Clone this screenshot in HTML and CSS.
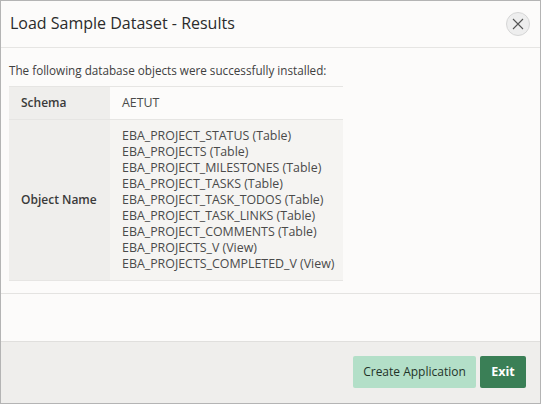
FILE: index.html
```html
<!DOCTYPE html>
<html lang="en">
<head>
<meta charset="utf-8">
<title>Load Sample Dataset - Results</title>
<link rel="stylesheet" href="styles.css">
</head>
<body>
<div class="dialog">
  <header class="dialog-header">
    <h1 class="dialog-title">Load Sample Dataset - Results</h1>
    <button class="close-btn" aria-label="Close">
      <svg width="12" height="12" viewBox="0 0 12 12"><path d="M1 1L11 11M11 1L1 11" stroke="#555" stroke-width="1.1" fill="none"/></svg>
    </button>
  </header>
  <main class="dialog-body">
    <section class="region">
      <p class="intro">The following database objects were successfully installed:</p>
      <table class="results">
        <colgroup><col class="col-head"><col class="col-value"></colgroup>
        <tr class="row-light">
          <th>Schema</th>
          <td>AETUT</td>
        </tr>
        <tr class="row-shaded">
          <th>Object Name</th>
          <td>
            EBA_PROJECT_STATUS (Table)<br>
            EBA_PROJECTS (Table)<br>
            EBA_PROJECT_MILESTONES (Table)<br>
            EBA_PROJECT_TASKS (Table)<br>
            EBA_PROJECT_TASK_TODOS (Table)<br>
            EBA_PROJECT_TASK_LINKS (Table)<br>
            EBA_PROJECT_COMMENTS (Table)<br>
            EBA_PROJECTS_V (View)<br>
            EBA_PROJECTS_COMPLETED_V (View)
          </td>
        </tr>
      </table>
    </section>
    <div class="spacer"></div>
  </main>
  <footer class="dialog-footer">
    <button class="btn btn-create">Create Application</button>
    <button class="btn btn-exit">Exit</button>
  </footer>
</div>
</body>
</html>
```

FILE: styles.css
```css
* { box-sizing: border-box; }
html, body { margin: 0; padding: 0; }
body {
  width: 541px;
  height: 404px;
  font-family: "Open Sans", "Noto Sans", sans-serif;
  background: #fcfbfa;
}
.dialog {
  width: 541px;
  height: 404px;
  border: 1px solid #b4b4b4;
  display: flex;
  flex-direction: column;
  background: #fcfbfa;
}
.dialog-header {
  height: 47px;
  flex: 0 0 47px;
  border-bottom: 1px solid #e6e5e3;
  display: flex;
  align-items: center;
  justify-content: space-between;
  padding: 0 10px 0 9px;
}
.dialog-title {
  margin: 0;
  font-size: 16px;
  font-weight: 500;
  color: #2b2b2b;
  margin-top: -2px;
}
.close-btn {
  width: 24px;
  height: 24px;
  border-radius: 50%;
  border: 1px solid #d6d6d6;
  background: #eeeeee;
  display: flex;
  align-items: center;
  justify-content: center;
  padding: 0;
  margin-top: -1px;
}
.dialog-body {
  flex: 1;
  display: flex;
  flex-direction: column;
}
.region {
  padding: 14px 8px 12px 8px;
  border-bottom: 1px solid #e4e3e1;
}
.intro {
  margin: 0 0 8px 0;
  font-size: 11.7px;
  line-height: 16px;
  color: #404040;
}
.results {
  border-collapse: collapse;
  table-layout: fixed;
  width: 334px;
  line-height: 16px;
}
.col-head { width: 101px; }
.col-value { width: 233px; }
.results th, .results td {
  border-top: 1px solid #e6e5e3;
  border-bottom: 1px solid #e6e5e3;
  border-left: none;
  border-right: none;
  padding: 8px 12px;
  vertical-align: middle;
  text-align: left;
  white-space: nowrap;
}
.results th {
  background: #efeeec;
  font-weight: 600;
  font-size: 12px;
  color: #3a3a3a;
}
.results td {
  color: #4a4a4a;
  font-size: 12.4px;
  padding-left: 12px;
  padding-right: 4px;
}
.row-light td { background: #fcfbfa; }
.row-shaded td { background: #f5f4f2; }
.spacer { flex: 1; }
.dialog-footer {
  flex: 0 0 62px;
  background: #efeeec;
  border-top: 1px solid #e0dfdd;
  display: flex;
  justify-content: flex-end;
  align-items: center;
  gap: 4px;
  padding: 0 14px 2px 0;
}
.btn {
  height: 32px;
  border: none;
  border-radius: 2px;
  font-family: "Open Sans", "Noto Sans", sans-serif;
  font-size: 12px;
  padding: 0 6px;
  white-space: nowrap;
}
.btn-create {
  width: 123px;
  background: #b3dfc8;
  color: #1f3328;
}
.btn-exit {
  width: 46px;
  background: #3a7f56;
  color: #ffffff;
  font-weight: 700;
  font-size: 12.5px;
}
```
